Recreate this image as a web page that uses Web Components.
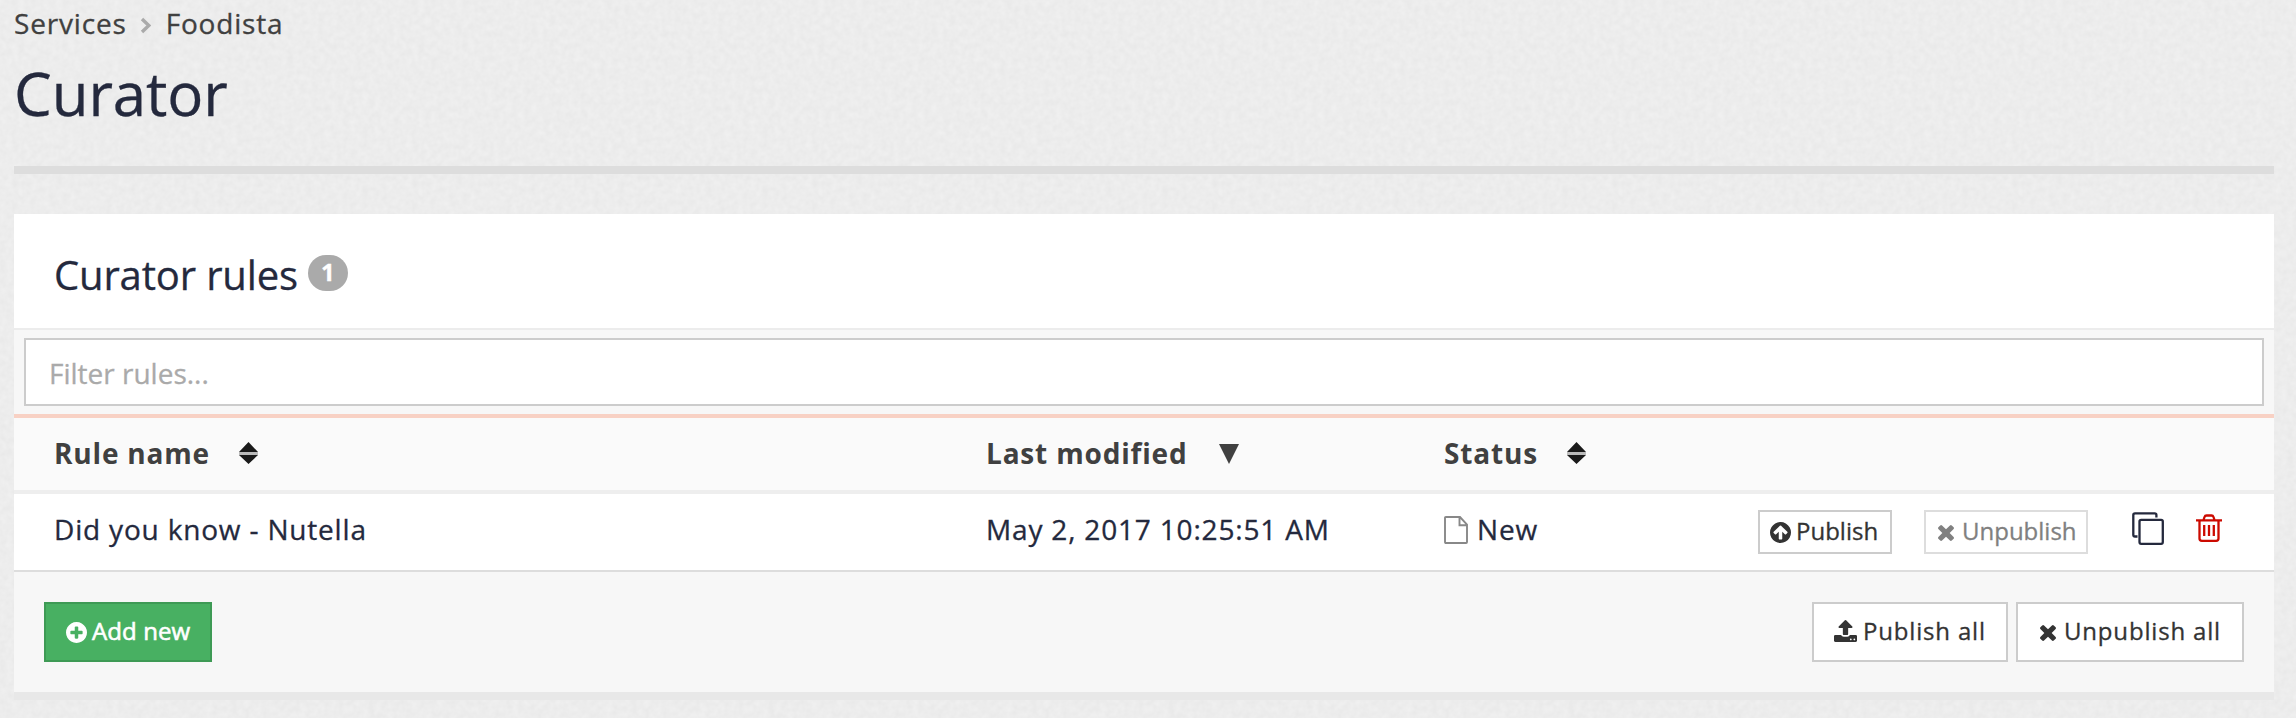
<!DOCTYPE html>
<html lang="en">
<head>
<meta charset="utf-8">
<title>Curator</title>
<style>
  body {
    margin: 0;
    min-height: 718px;
    font-family: "Open Sans", "Noto Sans", sans-serif;
    font-size: 28px;
    letter-spacing: 0.82px;
    color: #24293d;
    -webkit-text-stroke: 0.3px;
    background-color: #ececec;
    background-image: url("data:image/svg+xml,%3Csvg xmlns='http://www.w3.org/2000/svg' width='400' height='400'%3E%3Cfilter id='n' x='0' y='0' width='100%25' height='100%25' color-interpolation-filters='sRGB'%3E%3CfeTurbulence type='fractalNoise' baseFrequency='.16' numOctaves='2' seed='4' stitchTiles='stitch'/%3E%3CfeColorMatrix values='.04 0 0 0 .907 .04 0 0 0 .907 .04 0 0 0 .907 0 0 0 0 1'/%3E%3C/filter%3E%3Crect width='400' height='400' filter='url(%23n)'/%3E%3C/svg%3E");
  }
</style>
</head>
<body>
<curator-page></curator-page>

<script>
const html = String.raw;

const define = (name, markup, setup) => {
  const template = document.createElement("template");
  template.innerHTML = markup;

  window.customElements.define(
    name,
    class extends HTMLElement {
      connectedCallback() {
        if (!this.shadowRoot) {
          this.attachShadow({ mode: "open" });
          this.shadowRoot.appendChild(template.content.cloneNode(true));
          if (setup) setup(this, this.shadowRoot);
        }
      }
    }
  );
};

// viewBox, markup
const icons = {
  chevron: [
    "0 0 11 17",
    `<path d="M2 2l6.8 6.5L2 15" fill="none" stroke="currentColor" stroke-width="3.4"/>`,
  ],
  sort: [
    "0 0 19 22",
    `<path d="M9.5 0L19 10H0zM0 13h19L9.5 22z" fill="currentColor"/><path d="M0 10h19v3H0z" fill="#bbb"/>`,
  ],
  down: ["0 0 20 20", `<path d="M0 0h20L10 20z" fill="currentColor"/>`],
  file: [
    "0 0 24 28",
    `<path d="M1 1.900Q1 1 1.900 1H16l7 7.500v17.600q0 .9-.9.9H1.900Q1 27 1 26.100zM15.500 1v8.200H23" fill="none" stroke="currentColor" stroke-width="1.900"/>`,
  ],
  copy: [
    "0 0 32 33",
    `<g fill="none" stroke="currentColor" stroke-width="2.300"><path d="M5.500 24.500H3q-1.700 0-1.700-1.700V3q0-1.700 1.700-1.700h19.700q1.700 0 1.700 1.700v2.500"/><rect x="7.500" y="7.800" width="23.300" height="24" rx="1.700"/></g>`,
  ],
  trash: [
    "0 0 26 28",
    `<g fill="none" stroke="currentColor" stroke-width="2.300"><path d="M0 6.300h26M3.500 6.300v18.200q0 2.300 2.300 2.300h14.400q2.300 0 2.300-2.300V6.300M7.500 6l1-3q.5-1.500 2-1.500h5q1.500 0 2 1.500l1 3M8.200 11v11M13 11v11M17.800 11v11"/></g>`,
  ],
  plus: [
    "128 128 1536 1536",
    `<path fill="currentColor" d="M1344 960v-128q0-26-19-45t-45-19h-256v-256q0-26-19-45t-45-19h-128q-26 0-45 19t-19 45v256h-256q-26 0-45 19t-19 45v128q0 26 19 45t45 19h256v256q0 26 19 45t45 19h128q26 0 45-19t19-45v-256h256q26 0 45-19t19-45zm320-64q0 209-103 385.500t-279.500 279.500-385.500 103-385.500-103-279.500-279.500-103-385.500 103-385.500 279.500-279.500 385.500-103 385.500 103 279.500 279.500 103 385.500z"/>`,
  ],
  up: [
    "128 128 1536 1536",
    `<path fill="currentColor" d="M1412 895q0-27-18-45l-362-362-91-91q-18-18-45-18t-45 18l-91 91-362 362q-18 18-18 45t18 45l91 91q18 18 45 18t45-18l189-189v502q0 26 19 45t45 19h128q26 0 45-19t19-45v-502l189 189q19 19 45 19t45-19l91-91q18-18 18-45zm252 1q0 209-103 385.500t-279.500 279.500-385.500 103-385.500-103-279.500-279.500-103-385.500 103-385.500 279.500-279.500 385.500-103 385.500 103 279.500 279.500 103 385.500z"/>`,
  ],
  times: [
    "302 366 1188 1188",
    `<path fill="currentColor" d="M1490 1322q0 40-28 68l-136 136q-28 28-68 28t-68-28l-294-294-294 294q-28 28-68 28t-68-28l-136-136q-28-28-28-68t28-68l294-294-294-294q-28-28-28-68t28-68l136-136q28-28 68-28t68 28l294 294 294-294q28-28 68-28t68 28l136 136q28 28 28 68t-28 68l-294 294 294 294q28 28 28 68z"/>`,
  ],
  upload: [
    "64 64 1664 1600",
    `<path fill="currentColor" d="M1344 1472q0-26-19-45t-45-19-45 19-19 45 19 45 45 19 45-19 19-45zm256 0q0-26-19-45t-45-19-45 19-19 45 19 45 45 19 45-19 19-45zm128-224v320q0 40-28 68t-68 28h-1472q-40 0-68-28t-28-68v-320q0-40 28-68t68-28h427q21 56 70.500 92t110.500 36h256q61 0 110.500-36t70.500-92h427q40 0 68 28t28 68zm-325-648q-17 40-59 40h-256v448q0 26-19 45t-45 19h-256q-26 0-45-19t-19-45v-448h-256q-42 0-59-40-17-39 14-69l448-448q18-19 45-19t45 19l448 448q31 30 14 69z"/>`,
  ],
};

define(
  "curator-icon",
  html`
    <style>
      :host {
        display: block;
        flex: none;
      }
      svg {
        display: block;
        width: 100%;
        height: 100%;
      }
    </style>
    <svg preserveAspectRatio="none" aria-hidden="true"></svg>
  `,
  (host, root) => {
    const [viewBox, markup] = icons[host.getAttribute("name")];
    const svg = root.querySelector("svg");
    svg.setAttribute("viewBox", viewBox);
    svg.innerHTML = markup;
  }
);

define(
  "curator-breadcrumb",
  html`
    <style>
      :host {
        display: flex;
        align-items: center;
        height: 46px;
        line-height: 46px;
        color: #404040;
      }
      curator-icon {
        width: 11px;
        height: 17px;
        margin: 4px 15px 0 13px;
        color: #aaa;
      }
    </style>
    <slot name="parent"></slot>
    <curator-icon name="chevron"></curator-icon>
    <slot></slot>
  `
);

define(
  "curator-button",
  html`
    <style>
      :host {
        display: block;
        flex: none;
        font-size: 24px;
        color: #333;
      }
      button {
        display: flex;
        align-items: center;
        box-sizing: border-box;
        width: 100%;
        height: 60px;
        padding: 0 0 3px 20px;
        border: 2px solid #ccc;
        background: #fff;
        color: inherit;
        font: inherit;
        letter-spacing: inherit;
        white-space: nowrap;
      }
      :host([small]) {
        letter-spacing: 0;
      }
      :host([small]) button {
        height: 44px;
        padding-left: 10px;
      }
      :host([primary]) {
        color: #fff;
        letter-spacing: 0.1px;
        -webkit-text-stroke: 0.6px;
      }
      :host([primary]) button {
        background: #48b062;
        border-color: #3e9a55;
      }
      :host([disabled]) {
        color: #808080;
      }
      :host([disabled]) button {
        border-color: #ddd;
      }
      ::slotted(curator-icon) {
        width: 21px;
        height: 21px;
        margin: 3px 5px 0 0;
      }
      ::slotted(curator-icon[name="times"]) {
        width: 16px;
        height: 16px;
        margin: 4px 8px 0 2px;
      }
      ::slotted(curator-icon[name="upload"]) {
        width: 23px;
        height: 22px;
        margin: 1px 6px 0 0;
      }
    </style>
    <button type="button"><slot></slot></button>
  `
);

define(
  "curator-badge",
  html`
    <style>
      :host {
        box-sizing: border-box;
        width: 40px;
        height: 36px;
        border-radius: 18px;
        background: #aaa;
        color: #fff;
        font-size: 24px;
        font-weight: 700;
        line-height: 34px;
        letter-spacing: 0;
        text-align: center;
      }
    </style>
    <slot></slot>
  `
);

define(
  "curator-filter",
  html`
    <style>
      :host {
        display: block;
        padding: 8px 10px;
        background: #f7f7f7;
      }
      input {
        display: block;
        box-sizing: border-box;
        width: 100%;
        height: 68px;
        padding: 2px 24px 0 23px;
        border: 2px solid #ccc;
        border-radius: 0;
        background: #fff;
        font: inherit;
        letter-spacing: 0;
      }
      input::placeholder {
        color: #aaa;
      }
    </style>
    <input type="text" />
  `,
  (host, root) => {
    root.querySelector("input").placeholder = host.getAttribute("placeholder");
  }
);

define(
  "curator-row",
  html`
    <style>
      :host {
        display: grid;
        grid-template-columns: 932px 458px 1fr;
        align-items: center;
        box-sizing: border-box;
        height: 78px;
        padding: 0 52px 6px 40px;
        border-bottom: 2px solid #ddd;
        background: #fff;
      }
      :host([head]) {
        height: 76px;
        padding-bottom: 2px;
        border-bottom: 4px solid #eee;
        background: #fafafa;
        color: #404040;
        font-weight: 700;
        -webkit-text-stroke: 0;
      }
      .last {
        display: flex;
        align-items: center;
        justify-content: space-between;
      }
    </style>
    <slot name="name"></slot>
    <slot name="modified"></slot>
    <div class="last">
      <slot name="status"></slot>
      <slot name="actions"></slot>
    </div>
  `
);

define(
  "curator-cell",
  html`
    <style>
      :host {
        display: flex;
        align-items: center;
      }
      ::slotted(curator-icon[name="sort"]) {
        width: 19px;
        height: 22px;
        margin-left: 29px;
        color: #1a1a1a;
      }
      ::slotted(curator-icon[name="down"]) {
        width: 20px;
        height: 20px;
        margin: 2px 0 0 32px;
      }
      ::slotted(curator-icon[name="file"]) {
        width: 24px;
        height: 28px;
        margin: 2px 9px 0 0;
        color: #888;
      }
    </style>
    <slot></slot>
  `
);

define(
  "curator-actions",
  html`
    <style>
      :host {
        display: flex;
        align-items: center;
        margin-top: 6px;
      }
      .publish {
        width: 134px;
      }
      .unpublish {
        width: 164px;
        margin-left: 32px;
      }
      .copy {
        width: 32px;
        height: 33px;
        margin: -8px 0 0 44px;
      }
      .trash {
        width: 26px;
        height: 28px;
        margin: -8px 0 0 32px;
        color: #cc0a00;
      }
    </style>
    <curator-button small class="publish"><curator-icon name="up"></curator-icon>Publish</curator-button>
    <curator-button small disabled class="unpublish"><curator-icon name="times"></curator-icon>Unpublish</curator-button>
    <curator-icon name="copy" class="copy"></curator-icon>
    <curator-icon name="trash" class="trash"></curator-icon>
  `
);

define(
  "curator-panel",
  html`
    <style>
      :host {
        display: block;
        box-shadow: 0 8px 0 #e8e8e8;
      }
      header {
        display: flex;
        align-items: center;
        box-sizing: border-box;
        height: 116px;
        padding: 6px 40px 0;
        border-bottom: 2px solid #ececec;
        background: #fff;
        font-size: 40px;
        letter-spacing: -0.15px;
      }
      .rows {
        border-top: 4px solid #f8d1c4;
      }
      footer {
        display: flex;
        align-items: center;
        gap: 8px;
        height: 120px;
        padding: 0 30px;
        background: #f7f7f7;
      }
    </style>
    <header><slot name="title"></slot></header>
    <slot name="filter"></slot>
    <div class="rows"><slot></slot></div>
    <footer><slot name="footer"></slot></footer>
  `
);

define(
  "curator-page",
  html`
    <style>
      :host {
        display: block;
        padding: 0 22px 0 14px;
      }
      h1 {
        margin: 0;
        height: 120px;
        border-bottom: 8px solid #ddd;
        font-size: 60px;
        font-weight: 400;
        line-height: 95px;
        letter-spacing: -0.1px;
      }
      curator-panel {
        margin-top: 40px;
      }
      curator-badge {
        display: block;
        margin: -2px 0 0 10px;
      }
      .add {
        width: 168px;
        margin-right: auto;
      }
      .publish-all {
        width: 196px;
      }
      .unpublish-all {
        width: 228px;
      }
    </style>
    <curator-breadcrumb>
      <span slot="parent">Services</span>
      <span>Foodista</span>
    </curator-breadcrumb>
    <h1>Curator</h1>

    <curator-panel>
      <span slot="title">Curator rules</span>
      <curator-badge slot="title">1</curator-badge>
      <curator-filter slot="filter" placeholder="Filter rules..."></curator-filter>

      <curator-row head>
        <curator-cell slot="name">Rule name<curator-icon name="sort"></curator-icon></curator-cell>
        <curator-cell slot="modified">Last modified<curator-icon name="down"></curator-icon></curator-cell>
        <curator-cell slot="status">Status<curator-icon name="sort"></curator-icon></curator-cell>
      </curator-row>
      <curator-row>
        <curator-cell slot="name">Did you know - Nutella</curator-cell>
        <curator-cell slot="modified">May 2, 2017 10:25:51 AM</curator-cell>
        <curator-cell slot="status"><curator-icon name="file"></curator-icon>New</curator-cell>
        <curator-actions slot="actions"></curator-actions>
      </curator-row>

      <curator-button slot="footer" primary class="add"><curator-icon name="plus"></curator-icon>Add new</curator-button>
      <curator-button slot="footer" class="publish-all"><curator-icon name="upload"></curator-icon>Publish all</curator-button>
      <curator-button slot="footer" class="unpublish-all"><curator-icon name="times"></curator-icon>Unpublish all</curator-button>
    </curator-panel>
  `
);
</script>
</body>
</html>
